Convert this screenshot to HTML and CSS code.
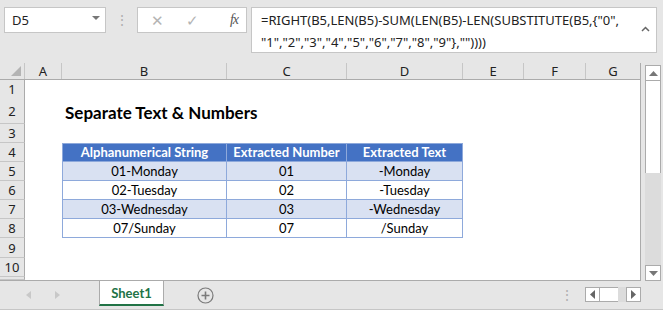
FILE: index.html
```html
<!DOCTYPE html>
<html lang="en">
<head>
    <meta charset="UTF-8">
    <title>Separate Text &amp; Numbers</title>
    <link rel="stylesheet" href="styles.css">
</head>
<body>
    <div class="formula-bar">
        <div class="name-box">
            <span>D5</span>
            <span class="caret"></span>
        </div>
        <div class="grip">⋮</div>
        <div class="fx-buttons">
            <span class="btn-x">✕</span>
            <span class="btn-ok">✓</span>
            <span class="btn-fx">fx</span>
        </div>
        <div class="formula-input">
            <div class="formula-text">=RIGHT(B5,LEN(B5)-SUM(LEN(B5)-LEN(SUBSTITUTE(B5,{"0",<br>"1","2","3","4","5","6","7","8","9"},""))))</div>
            <span class="collapse">
                <svg width="9" height="6" viewBox="0 0 9 6"><path d="M1 5 L4.5 1.5 L8 5" fill="none" stroke="#666" stroke-width="1.5"/></svg>
            </span>
        </div>
    </div>

    <div class="sheet-area">
        <div class="sheet">
            <div class="row col-heads">
                <div class="corner"></div>
                <div>A</div><div>B</div><div>C</div><div>D</div><div>E</div><div>F</div><div>G</div>
            </div>
            <div class="row r-18"><div class="rh">1</div></div>
            <div class="row r-26">
                <div class="rh">2</div>
                <div class="title">Separate Text &amp; Numbers</div>
            </div>
            <div class="row"><div class="rh">3</div></div>
            <div class="row">
                <div class="rh">4</div>
                <div class="tc th first">Alphanumerical String</div>
                <div class="tc th">Extracted Number</div>
                <div class="tc th">Extracted Text</div>
            </div>
            <div class="row band">
                <div class="rh">5</div>
                <div class="tc first">01-Monday</div>
                <div class="tc">01</div>
                <div class="tc">-Monday</div>
            </div>
            <div class="row">
                <div class="rh">6</div>
                <div class="tc first">02-Tuesday</div>
                <div class="tc">02</div>
                <div class="tc">-Tuesday</div>
            </div>
            <div class="row band">
                <div class="rh">7</div>
                <div class="tc first">03-Wednesday</div>
                <div class="tc">03</div>
                <div class="tc">-Wednesday</div>
            </div>
            <div class="row">
                <div class="rh">8</div>
                <div class="tc first">07/Sunday</div>
                <div class="tc">07</div>
                <div class="tc">/Sunday</div>
            </div>
            <div class="row r-20"><div class="rh">9</div></div>
            <div class="row"><div class="rh">10</div></div>
            <div class="row r-4"><div class="rh"></div></div>
        </div>

        <div class="vscroll">
            <div class="sb-btn">
                <svg width="9" height="5" viewBox="0 0 9 5"><path d="M0 5 L4.5 0 L9 5 Z" fill="#777"/></svg>
            </div>
            <div class="sb-thumb"></div>
            <div class="sb-track"></div>
            <div class="sb-btn">
                <svg width="9" height="5" viewBox="0 0 9 5"><path d="M0 0 L4.5 5 L9 0 Z" fill="#777"/></svg>
            </div>
        </div>
    </div>

    <div class="tab-bar">
        <div class="tab-nav">
            <svg width="5" height="8" viewBox="0 0 5 8"><path d="M5 0 L0 4 L5 8 Z" fill="#c8c8c8"/></svg>
            <svg width="5" height="8" viewBox="0 0 5 8"><path d="M0 0 L5 4 L0 8 Z" fill="#c8c8c8"/></svg>
        </div>
        <div class="sheet-tab">Sheet1</div>
        <div class="add-sheet">
            <svg width="17" height="17" viewBox="0 0 17 17">
                <circle cx="8.5" cy="8.5" r="7.5" fill="none" stroke="#7a7a7a" stroke-width="1.2"/>
                <path d="M8.5 4.5 V12.5 M4.5 8.5 H12.5" stroke="#7a7a7a" stroke-width="1.6"/>
            </svg>
        </div>
        <div class="spacer"></div>
        <div class="hgrip">⋮</div>
        <div class="hscroll">
            <div class="sb-btn">
                <svg width="5" height="9" viewBox="0 0 5 9"><path d="M5 0 L0 4.5 L5 9 Z" fill="#666"/></svg>
            </div>
            <div class="hs-thumb"></div>
            <div class="hs-track"></div>
            <div class="sb-btn">
                <svg width="5" height="9" viewBox="0 0 5 9"><path d="M0 0 L5 4.5 L0 9 Z" fill="#666"/></svg>
            </div>
        </div>
    </div>
</body>
</html>
```

FILE: styles.css
```css
* {
    margin: 0;
    padding: 0;
    box-sizing: border-box;
}

body {
    width: 663px;
    height: 310px;
    background: #e6e6e6;
    font-family: 'Noto Sans', 'Open Sans', sans-serif;
    overflow: hidden;
}

/* formula bar */

.formula-bar {
    display: flex;
    align-items: flex-start;
    height: 63px;
    padding: 7px 6px 0 4px;
}

.name-box {
    width: 102px;
    height: 26px;
    background: white;
    border: 1px solid #c6c6c6;
    display: flex;
    align-items: center;
    justify-content: space-between;
    padding: 0 5px 0 7px;
    font-size: 13px;
    color: #222;
}

.caret {
    width: 0;
    height: 0;
    border-left: 4px solid transparent;
    border-right: 4px solid transparent;
    border-top: 4px solid #777;
    margin-top: -4px;
}

.grip {
    width: 31px;
    text-align: center;
    color: #b0b0b0;
    font-size: 14px;
    line-height: 26px;
}

.fx-buttons {
    width: 110px;
    height: 26px;
    background: white;
    border: 1px solid #c6c6c6;
    display: flex;
    align-items: center;
    padding: 0 8px 0 13px;
    color: #b4b4b4;
    font-size: 15px;
}

.btn-ok {
    margin-left: 22px;
    font-size: 15px;
}

.btn-fx {
    margin-left: auto;
    font-family: 'Liberation Serif', serif;
    font-style: italic;
    color: #555;
    font-size: 14px;
    letter-spacing: -1px;
}

.formula-input {
    flex: 1;
    height: 46px;
    margin-left: 4px;
    background: white;
    border: 1px solid #c6c6c6;
    display: flex;
    padding: 1px 6px 0 9px;
}

.formula-text {
    flex: 1;
    font-size: 13px;
    line-height: 22px;
    color: #222;
    white-space: nowrap;
}

.collapse {
    padding-top: 6px;
}

/* sheet grid */

.sheet-area {
    display: flex;
    align-items: flex-start;
    height: 218px;
}

.sheet {
    width: 641px;
    height: 218px;
    background: white;
    border-right: 1px solid #ababab;
    border-bottom: 1px solid #ababab;
}

.row {
    display: grid;
    grid-template-columns: 25px 37px 165px 120px 116px 61px 62px 54px;
    height: 19px;
}

.r-18 { height: 18px; }
.r-20 { height: 20px; }
.r-26 { height: 26px; }
.r-4 { height: 3px; overflow: hidden; }

.col-heads {
    height: 17px;
    background: #e6e6e6;
    border-bottom: 1px solid #ababab;
    font-size: 13px;
    color: #222;
}

.col-heads div {
    text-align: center;
    line-height: 16px;
    border-right: 1px solid #c6c6c6;
}

.col-heads div:last-child {
    border-right: none;
}

.corner {
    position: relative;
}

.corner::after {
    content: '';
    position: absolute;
    right: 3px;
    bottom: 3px;
    border-left: 10px solid transparent;
    border-bottom: 10px solid #b4b4b4;
}

.rh {
    grid-column: 1;
    background: #e6e6e6;
    border-right: 1px solid #ababab;
    border-bottom: 1px solid #c6c6c6;
    text-align: center;
    font-size: 13px;
    color: #222;
    display: flex;
    align-items: center;
    justify-content: center;
}

.title {
    grid-column: 3 / 6;
    font-family: Lato, sans-serif;
    font-weight: bold;
    font-size: 17px;
    color: #000;
    padding: 4px 0 0 3px;
}

.tc {
    font-family: Lato, sans-serif;
    font-size: 13px;
    color: #000;
    text-align: center;
    line-height: 18px;
    border-right: 1px solid #8ea9db;
    border-bottom: 1px solid #8ea9db;
}

.tc.first {
    grid-column: 3;
    border-left: 1px solid #8ea9db;
}

.th {
    background: #4472c4;
    color: white;
    font-weight: bold;
    border-top: 1px solid #8ea9db;
    line-height: 17px;
}

.band .tc {
    background: #d9e1f2;
}

/* scroll bars */

.vscroll {
    width: 16px;
    height: 218px;
    margin-left: 4px;
    padding-top: 2px;
    display: flex;
    flex-direction: column;
}

.sb-btn {
    width: 16px;
    height: 16px;
    background: white;
    border: 1px solid #ababab;
    display: flex;
    align-items: center;
    justify-content: center;
}

.sb-thumb {
    height: 92px;
    background: white;
    border-left: 1px solid #ababab;
    border-right: 1px solid #ababab;
}

.sb-track {
    flex: 1;
    background: #dcdcdc;
}

/* sheet tabs */

.tab-bar {
    display: flex;
    align-items: flex-start;
    height: 29px;
    border-bottom: 1px solid #c6c6c6;
}

.tab-nav {
    width: 99px;
    display: flex;
    gap: 24px;
    padding: 10px 0 0 26px;
}

.sheet-tab {
    width: 65px;
    height: 25px;
    background: white;
    border-left: 1px solid #ababab;
    border-right: 1px solid #ababab;
    border-bottom: 2px solid #217346;
    color: #217346;
    font-family: Lato, sans-serif;
    font-weight: bold;
    font-size: 13px;
    text-align: center;
    line-height: 24px;
}

.add-sheet {
    padding: 6px 0 0 33px;
}

.spacer {
    flex: 1;
}

.hgrip {
    color: #b0b0b0;
    font-size: 14px;
    line-height: 28px;
    margin-right: 11px;
}

.hscroll {
    display: flex;
    margin-top: 6px;
    margin-right: 22px;
}

.hscroll .sb-btn {
    width: 15px;
    height: 15px;
}

.hs-thumb {
    width: 18px;
    height: 15px;
    background: white;
    border-top: 1px solid #ababab;
    border-bottom: 1px solid #ababab;
}

.hs-track {
    width: 8px;
    height: 15px;
    background: #dcdcdc;
}
```
